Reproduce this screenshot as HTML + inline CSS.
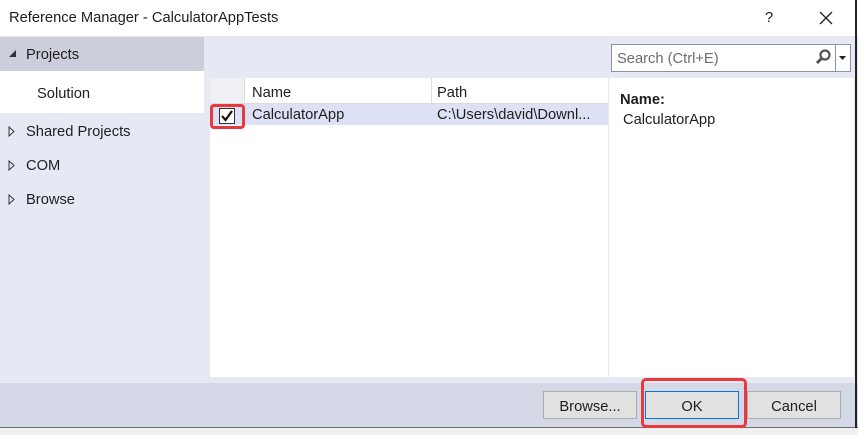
<!DOCTYPE html>
<html><head><style>
*{margin:0;padding:0;box-sizing:border-box}
body{width:858px;height:435px;position:relative;overflow:hidden;background:#e6e9f4;font-family:"Segoe UI","Liberation Sans",sans-serif;font-size:14.7px;color:#1e1e1e}
.a{position:absolute}
</style></head><body>
<div class="a" style="left:0;top:0;width:858px;height:36px;background:#fff"></div>
<div class="a" style="left:9px;top:10px">Reference Manager - CalculatorAppTests</div>
<div class="a" style="left:765px;top:10px">?</div>
<svg class="a" style="left:819px;top:11px" width="14" height="14"><path d="M1 1L13 13M13 1L1 13" stroke="#222" stroke-width="1.3"/></svg>
<div class="a" style="left:0;top:37px;width:204px;height:34px;background:#cccedb"></div>
<svg class="a" style="left:8px;top:50px" width="9" height="8"><path d="M8 0L8 7L1 7Z" fill="#333"/></svg>
<div class="a" style="left:26px;top:47px">Projects</div>
<div class="a" style="left:0;top:71px;width:204px;height:42px;background:#fff"></div>
<div class="a" style="left:37px;top:86px">Solution</div>
<svg class="a" style="left:8px;top:126px" width="7" height="11"><path d="M1 1L6 5.5L1 10Z" fill="none" stroke="#333"/></svg>
<div class="a" style="left:26px;top:124px">Shared Projects</div>
<svg class="a" style="left:8px;top:160px" width="7" height="11"><path d="M1 1L6 5.5L1 10Z" fill="none" stroke="#333"/></svg>
<div class="a" style="left:26px;top:158px">COM</div>
<svg class="a" style="left:8px;top:194px" width="7" height="11"><path d="M1 1L6 5.5L1 10Z" fill="none" stroke="#333"/></svg>
<div class="a" style="left:26px;top:192px">Browse</div>
<div class="a" style="left:611px;top:44px;width:240px;height:28px;background:#fff;border:1px solid #8a93ad"></div>
<div class="a" style="left:617px;top:51px;color:#6d6d6d">Search (Ctrl+E)</div>
<svg class="a" style="left:814px;top:48px" width="18" height="18"><circle cx="11" cy="7" r="4.5" fill="none" stroke="#555" stroke-width="2.2"/><path d="M8 10L3 15" stroke="#555" stroke-width="3"/></svg>
<div class="a" style="left:835px;top:45px;width:1px;height:26px;background:#8a93ad"></div>
<svg class="a" style="left:839px;top:56px" width="8" height="5"><path d="M0 0H7L3.5 4Z" fill="#222"/></svg>
<div class="a" style="left:210px;top:78px;width:398px;height:299px;background:#fff"></div>
<div class="a" style="left:210px;top:78px;width:35px;height:26px;background:#eef0f6;border-right:1px solid #dcdcdc;border-bottom:1px solid #dcdcdc"></div>
<div class="a" style="left:245px;top:78px;width:363px;height:26px;border-bottom:1px solid #dcdcdc"></div>
<div class="a" style="left:431px;top:78px;width:1px;height:26px;background:#dcdcdc"></div>
<div class="a" style="left:252px;top:85px">Name</div>
<div class="a" style="left:437px;top:85px">Path</div>
<div class="a" style="left:210px;top:104px;width:398px;height:21px;background:#dde1f5"></div>
<div class="a" style="left:252px;top:107px">CalculatorApp</div>
<div class="a" style="left:437px;top:107px">C:\Users\david\Downl...</div>
<div class="a" style="left:210px;top:104px;width:35px;height:25px;border:3px solid #e8393d;border-radius:4px"></div>
<div class="a" style="left:219px;top:108px;width:16px;height:16px;background:#fff;border:1px solid #333"></div>
<svg class="a" style="left:220px;top:109px" width="14" height="14"><path d="M2 7L5.5 11L12 2" fill="none" stroke="#111" stroke-width="2.2"/></svg>
<div class="a" style="left:609px;top:78px;width:245px;height:299px;background:#fff"></div>
<div class="a" style="left:620px;top:92px;font-weight:bold">Name:</div>
<div class="a" style="left:623px;top:112px">CalculatorApp</div>
<div class="a" style="left:0;top:383px;width:858px;height:44px;background:#d5d9e7"></div>
<div class="a" style="left:0;top:427px;width:858px;height:1px;background:#6d6d6d"></div>
<div class="a" style="left:0;top:428px;width:858px;height:7px;background:#f0f0f0"></div>
<div class="a" style="left:543px;top:391px;width:94px;height:28px;background:#e1e1e1;border:1px solid #adadad;text-align:center;line-height:30px">Browse...</div>
<div class="a" style="left:641px;top:378px;width:106px;height:50px;border:3px solid #e8393d;border-radius:5px"></div>
<div class="a" style="left:645px;top:391px;width:94px;height:28px;background:#e1e1e1;border:1px solid #0078d7;text-align:center;line-height:30px">OK</div>
<div class="a" style="left:747px;top:391px;width:94px;height:28px;background:#e1e1e1;border:1px solid #adadad;text-align:center;line-height:30px">Cancel</div>
<div class="a" style="left:855px;top:0;width:2px;height:428px;background:#222"></div>
</body></html>
